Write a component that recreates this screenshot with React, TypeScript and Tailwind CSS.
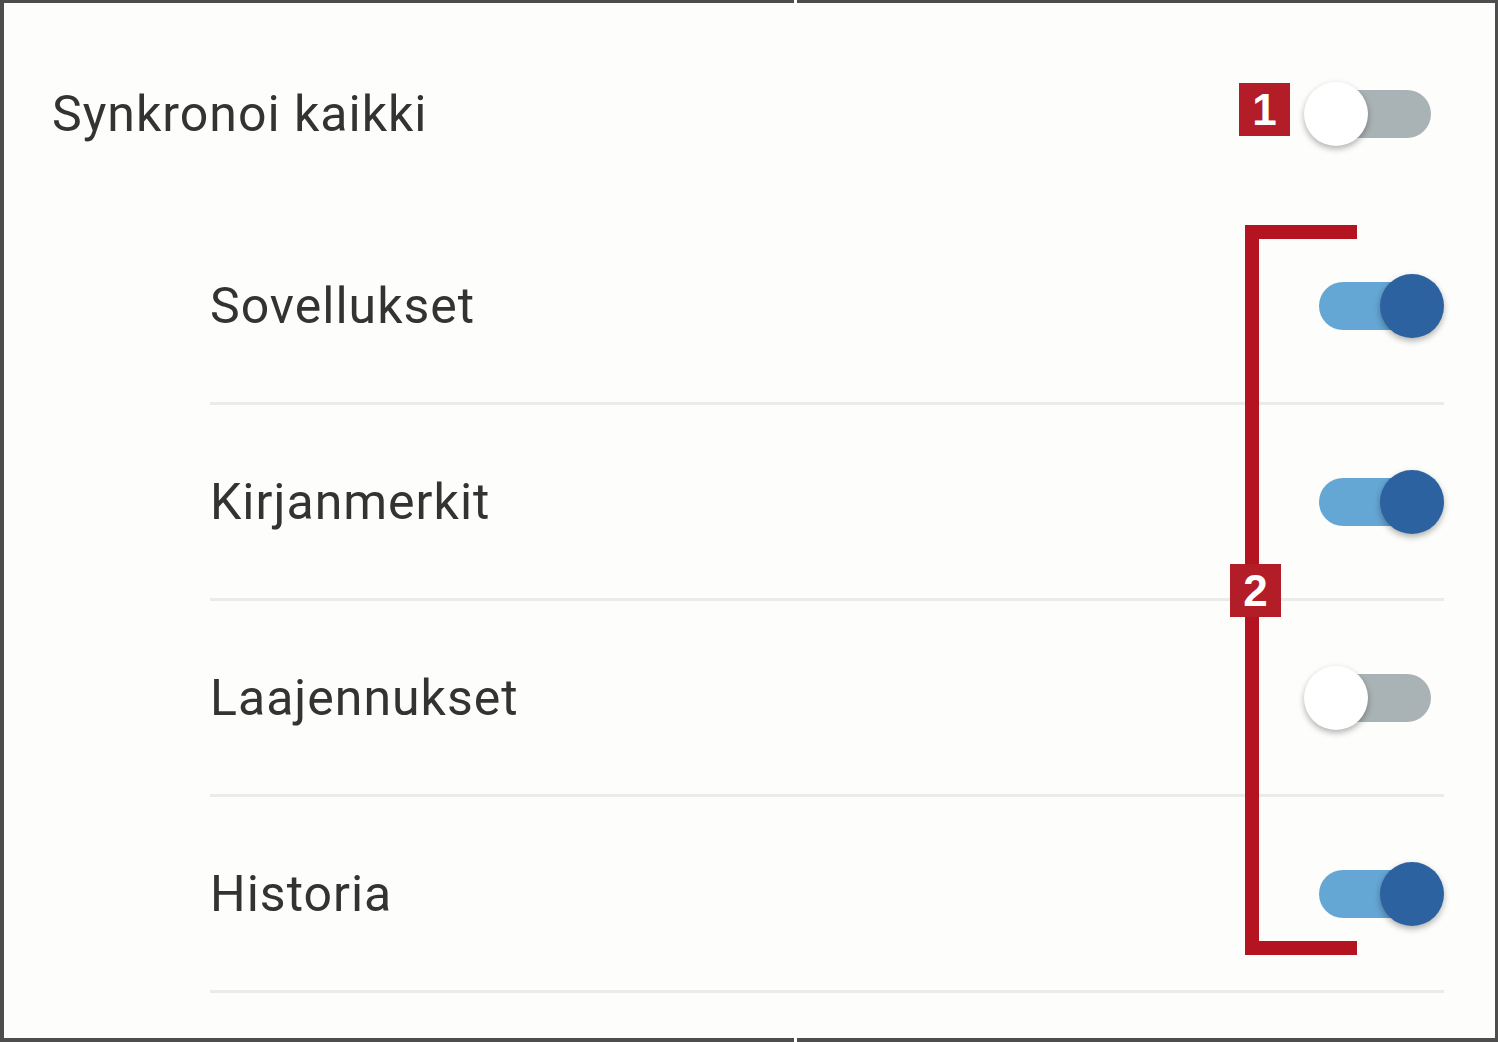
import React from "react";

function Toggle({ on }: { on: boolean }) {
  const knob = (
    <div
      className={
        "relative z-10 w-[64px] h-[64px] rounded-full shrink-0 shadow-[0_3px_6px_rgba(0,0,0,0.3)] " +
        (on ? "bg-[#2c62a0] ml-[-51px]" : "bg-white")
      }
    />
  );
  const track = (
    <div
      className={
        "w-[112px] h-[48px] rounded-full shrink-0 " +
        (on ? "bg-[#64a6d4] ml-[15px]" : "bg-[#a9b2b4] ml-[-49px]")
      }
    />
  );
  return (
    <div className="flex items-center w-[140px] h-[66px] shrink-0">
      {on ? (
        <>
          {track}
          {knob}
        </>
      ) : (
        <>
          {knob}
          {track}
        </>
      )}
    </div>
  );
}

const rows = [
  { label: "Sovellukset", on: true },
  { label: "Kirjanmerkit", on: true },
  { label: "Laajennukset", on: false },
  { label: "Historia", on: true },
];

export default function App() {
  return (
    <div className="relative w-[1500px] h-[1042px] bg-white">
      <div
        className="relative w-[1498px] h-[1042px] bg-[#fdfdfb] border-l-[4px] border-t-[3px] border-r-[3px] border-b-[4px] border-[#4d4d4d] text-[#333] overflow-hidden"
        style={{ fontFamily: "Roboto, 'Noto Sans', sans-serif" }}
      >
        {/* header */}
        <div className="flex items-center justify-between h-[96px] mt-[63px] mb-[47px] pl-[48px] pr-[51px]">
          <span className="text-[50px] leading-none tracking-[1px]">Synkronoi kaikki</span>
          <Toggle on={false} />
        </div>
        {/* list */}
        <div className="ml-[206px] mr-[51px] flex flex-col">
          {rows.map((r) => (
            <div
              key={r.label}
              className="flex items-center justify-between h-[196px] border-b-[3px] border-[#ebebea]"
            >
              <span className="text-[50px] leading-none tracking-[1px]">{r.label}</span>
              <Toggle on={r.on} />
            </div>
          ))}
        </div>

        {/* annotation 1 */}
        <div
          className="absolute left-[1235px] top-[80px] w-[51px] h-[53px] bg-[#b21d27] flex items-center justify-center text-white font-bold text-[44px] leading-none"
          style={{ fontFamily: "'Liberation Sans', Arial, sans-serif" }}
        >
          1
        </div>
        {/* bracket */}
        <div className="absolute left-[1241px] top-[222px] w-[112px] h-[730px] border-l-[14px] border-t-[14px] border-b-[14px] border-[#b3141f]" />
        {/* annotation 2 */}
        <div
          className="absolute left-[1226px] top-[561px] w-[51px] h-[53px] bg-[#b21d27] flex items-center justify-center text-white font-bold text-[44px] leading-none"
          style={{ fontFamily: "'Liberation Sans', Arial, sans-serif" }}
        >
          2
        </div>
      </div>
      {/* notch marks */}
      <div className="absolute left-[794px] top-0 w-[3px] h-[3px] bg-white" />
      <div className="absolute left-[794px] top-[1038px] w-[3px] h-[4px] bg-white" />
    </div>
  );
}
